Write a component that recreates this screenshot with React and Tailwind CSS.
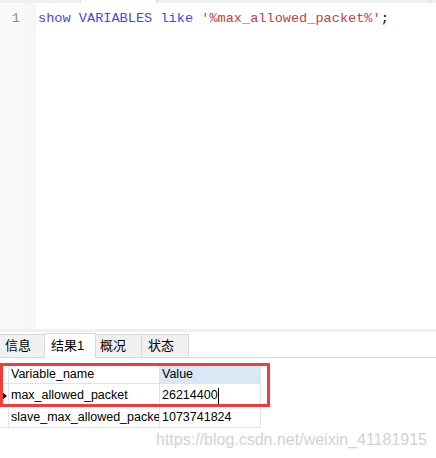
export default function App() {
  const code = "font-['Liberation_Mono','Courier_New',monospace] text-[13.6px]";
  const ui = "font-['Liberation_Sans','Noto_Sans_CJK_SC',sans-serif]";

  return (
    <div className={`relative w-[436px] h-[458px] overflow-hidden bg-white flex flex-col ${ui}`}>
      {/* top document tab strip */}
      <div className="h-[3px] flex bg-[#f0f0f0]">
        <div className="w-[81px] border-r border-[#d9d9d9]" />
        <div className="w-[75px] bg-white" />
        <div className="w-[275px] border-l border-r border-[#d9d9d9]" />
        <div className="flex-1" />
      </div>

      {/* editor */}
      <div className="h-[326px] flex">
        <div className={`w-[24px] bg-[#fafafa] text-right pr-[4px] pt-[6px] leading-[20px] text-[#8c8c8c] ${code}`}>1</div>
        <div className="w-[12px] bg-[repeating-conic-gradient(#f2f2f2_0%_25%,#fcfcfc_0%_50%)] bg-[length:2px_2px]" />
        <div className={`pl-[2px] pt-[6px] leading-[20px] whitespace-pre ${code}`}>
          <span className="text-[#4444f4]">show</span>{" "}
          <span className="text-[#4444f4]">VARIABLES</span>{" "}
          <span className="text-[#4444f4]">like</span>{" "}
          <span className="text-[#c84040]">'%max_allowed_packet%'</span>
          <span className="text-black">;</span>
        </div>
      </div>

      {/* separator */}
      <div className="h-[3px] bg-[#f0f0f0]" />

      {/* result tabs */}
      <div className="h-[26px] flex items-end border-b border-[#d9d9d9] text-[13px] text-black">
        <div className="w-[45px] h-[23px] bg-[#f0f0f0] border-t border-r border-[#d9d9d9] pl-[5px] leading-[22px]">信息</div>
        <div className="w-[51px] h-[25px] bg-white border-t border-r border-[#d9d9d9] -mb-px pl-[6px] leading-[23px]">结果1</div>
        <div className="w-[46px] h-[23px] bg-[#f0f0f0] border-t border-r border-[#d9d9d9] pl-[4px] leading-[22px]">概况</div>
        <div className="w-[47px] h-[23px] bg-[#f0f0f0] border-t border-r border-[#d9d9d9] pl-[6px] leading-[22px]">状态</div>
      </div>

      {/* result grid */}
      <div className="mt-[5px] w-[261px] text-[12.5px] text-black">
        <div className="h-[21px] flex border-b border-[#e3e3e3]">
          <div className="w-[9px] border-r border-[#e3e3e3]" />
          <div className="w-[151px] border-r border-[#e3e3e3] pl-[2px] pt-[2px] leading-[18px]">Variable_name</div>
          <div className="w-[101px] bg-[#dae8f6] border-r border-[#e3e3e3] pl-[2px] pt-[2px] leading-[18px]">Value</div>
        </div>
        <div className="h-[21px] flex border-b border-[#e3e3e3]">
          <div className="w-[9px] border-r border-[#e3e3e3] flex items-center pt-[3px]">
            <svg width="5" height="8" viewBox="0 0 5 8" className="ml-[2px]">
              <path d="M0 0 L5 4 L0 8 Z" fill="#000" />
            </svg>
          </div>
          <div className="w-[151px] border-r border-[#e3e3e3] pl-[2px] pt-[3px] leading-[17px] whitespace-nowrap overflow-hidden">max_allowed_packet</div>
          <div className="w-[101px] border-r border-[#e3e3e3] pl-[2px] pt-[3px] flex items-center leading-[17px]">
            <span>26214400</span>
            <span className="w-px h-[16px] bg-black" />
          </div>
        </div>
        <div className="h-[23px] flex border-b border-[#e3e3e3]">
          <div className="w-[9px] border-r border-[#e3e3e3]" />
          <div className="w-[151px] border-r border-[#e3e3e3] pl-[2px] pt-[3px] leading-[18px] whitespace-nowrap overflow-hidden">slave_max_allowed_packet</div>
          <div className="w-[101px] border-r border-[#e3e3e3] pl-[2px] pt-[3px] leading-[18px]">1073741824</div>
        </div>
      </div>

      {/* red annotation box */}
      <div className="absolute left-0 top-[363px] w-[270px] h-[44px] border-[3px] border-[#f53a3a]" />

      {/* watermark */}
      <div className="absolute left-[156px] top-[430px] font-['Liberation_Sans',Arial,sans-serif] text-[16px] leading-[20px] text-[#d2d2d2] whitespace-nowrap">
        https://blog.csdn.net/weixin_41181915
      </div>
    </div>
  );
}
